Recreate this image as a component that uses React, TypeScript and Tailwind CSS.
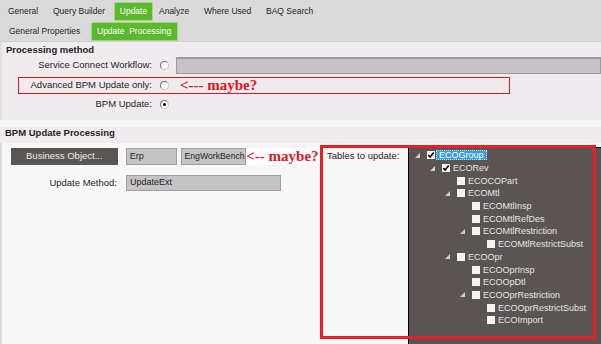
const tree = [
  { name: "ECOGroup", level: 0, open: true, checked: true, selected: true },
  { name: "ECORev", level: 1, open: true, checked: true },
  { name: "ECOCOPart", level: 2 },
  { name: "ECOMtl", level: 2, open: true },
  { name: "ECOMtlInsp", level: 3 },
  { name: "ECOMtlRefDes", level: 3 },
  { name: "ECOMtlRestriction", level: 3, open: true },
  { name: "ECOMtlRestrictSubst", level: 4 },
  { name: "ECOOpr", level: 2, open: true },
  { name: "ECOOprInsp", level: 3 },
  { name: "ECOOpDtl", level: 3 },
  { name: "ECOOprRestriction", level: 3, open: true },
  { name: "ECOOprRestrictSubst", level: 4 },
  { name: "ECOImport", level: 4 },
];

const indent = ["pl-[6px]", "pl-[21px]", "pl-[36px]", "pl-[51px]", "pl-[66px]"];

function Radio({ on }: { on?: boolean }) {
  return (
    <span className="w-[9px] h-[9px] rounded-full bg-white border border-t-[#6e6e6e] border-l-[#6e6e6e] border-r-[#c8c8c8] border-b-[#c8c8c8] flex items-center justify-center">
      {on && <span className="w-[3px] h-[3px] rounded-full bg-black" />}
    </span>
  );
}

export default function App() {
  return (
    <div className="relative w-[601px] h-[344px] overflow-hidden bg-[#f7f7f7] font-['Liberation_Sans',Arial,sans-serif] text-[#1e1e1e]">
      {/* TOP TABS */}
      <div className="h-[22px] bg-[#dadada] flex text-[8.5px]">
        <div className="w-[53px] pl-[8px] flex items-center">General</div>
        <div className="w-[61px] flex items-center">Query Builder</div>
        <div className="w-[39px] mt-[2px] h-[19px] bg-[#5cb82c] border border-[#a3d97a] rounded-t-[2px] text-white flex items-center justify-center">Update</div>
        <div className="w-[51px] pl-[6px] flex items-center">Analyze</div>
        <div className="w-[62px] flex items-center">Where Used</div>
        <div className="flex items-center">BAQ Search</div>
      </div>

      {/* SUB TABS */}
      <div className="h-[20px] bg-[#dadada] flex text-[8.5px] border-b border-[#cfcfcf]">
        <div className="w-[91px] pl-[9px] flex items-center">General Properties</div>
        <div className="w-[87px] h-[19px] bg-[#5cb82c] border border-[#a3d97a] rounded-t-[2px] text-white flex items-center pl-[5px]">Update&nbsp; Processing</div>
      </div>

      {/* PROCESSING METHOD */}
      <div className="h-[78px] bg-[#efebee] text-[9.5px] border-l-2 border-[#e2dfe1]">
        <div className="h-[14px] pl-[4px] pt-[1px] font-bold leading-[13px]">Processing method</div>
        <div className="h-[19px] flex items-center">
          <span className="w-[150px] text-right">Service Connect Workflow:</span>
          <span className="ml-[8px]"><Radio /></span>
          <span className="ml-[7px] flex-1 h-[17px] bg-[#c6c3c6] border border-[#9d9b9d] border-t-2" />
        </div>
        <div className="h-[20px] flex items-center">
          <span className="w-[150px] text-right">Advanced BPM Update only:</span>
          <span className="ml-[8px]"><Radio /></span>
          <span className="ml-[11px] font-['Liberation_Serif','Times_New_Roman',serif] font-bold text-[15px] text-[#e3141b] leading-[15px]">&lt;--- maybe?</span>
        </div>
        <div className="h-[19px] flex items-center">
          <span className="w-[150px] text-right">BPM Update:</span>
          <span className="ml-[8px]"><Radio on /></span>
        </div>
      </div>

      <div className="h-[7px]" />

      {/* BPM UPDATE PROCESSING */}
      <div className="h-[16px] bg-[#efebee] pl-[5px] text-[9.5px] font-bold leading-[11px]">BPM Update Processing</div>

      <div className="h-[201px] flex text-[9.5px] border-l-2 border-[#dcdcdc]">
        <div className="w-[319px] pt-[5px]">
          <div className="h-[17px] flex">
            <div className="ml-[9px] w-[107px] bg-[#5b5654] text-[#ececec] flex items-center justify-center">Business Object...</div>
            <div className="ml-[8px] w-[52px] bg-[#c6c3c6] border border-[#a09ea0] pl-[3px] flex items-center text-[9px]">Erp</div>
            <div className="ml-[4px] w-[65px] bg-[#c6c3c6] border border-[#a09ea0] pl-[2px] flex items-center text-[8.7px] whitespace-nowrap overflow-hidden">EngWorkBench</div>
            <div className="w-[75px] bg-white font-['Liberation_Serif','Times_New_Roman',serif] font-bold text-[15px] text-[#e3141b] leading-[15px] flex items-center whitespace-nowrap">&lt;-- maybe?</div>
          </div>
          <div className="mt-[10px] h-[16px] flex items-center">
            <span className="w-[115px] text-right">Update Method:</span>
            <div className="ml-[9px] w-[155px] h-[16px] bg-[#c6c3c6] border border-[#a09ea0] pl-[3px] flex items-center text-[9px]">UpdateExt</div>
          </div>
        </div>

        <div className="w-[87px] pl-[6px] pt-[7px] leading-[12px]">Tables to update:</div>

        <div className="flex-1 mt-[4px] bg-[#5a5552] border-l border-t border-black pt-[1px] text-[9px] text-[#e6e6e6]">
          {tree.map((n) => (
            <div key={n.name} className={`h-[12.7px] flex items-center ${indent[n.level]}`}>
              <span className="w-[12px] flex items-center">
                {n.open && (
                  <svg width="5" height="5" viewBox="0 0 5 5">
                    <polygon points="5,0 5,5 0,5" fill="#cfcfcf" />
                  </svg>
                )}
              </span>
              <span className="w-[8px] h-[8px] bg-[#f4f4f4] flex items-center justify-center">
                {n.checked && (
                  <svg width="8" height="8" viewBox="0 0 8 8">
                    <path d="M1.4 4.1 L3.2 6.1 L6.7 1.6" stroke="#000" strokeWidth="1.6" fill="none" />
                  </svg>
                )}
              </span>
              {n.selected ? (
                <span className="ml-[1px] px-[2px] h-[10px] bg-[#379ddc] border border-dotted border-[#bfe3f8] text-white flex items-center leading-[10px]">{n.name}</span>
              ) : (
                <span className="ml-[3px] leading-[10px]">{n.name}</span>
              )}
            </div>
          ))}
        </div>
      </div>

      {/* ANNOTATIONS */}
      <div className="absolute left-[18px] top-[77px] w-[492px] h-[17px] border border-[#e3141b]" />
      <div className="absolute left-[320px] top-[145px] w-[276px] h-[194px] border-[3px] border-[#ee1c24]" />
    </div>
  );
}
